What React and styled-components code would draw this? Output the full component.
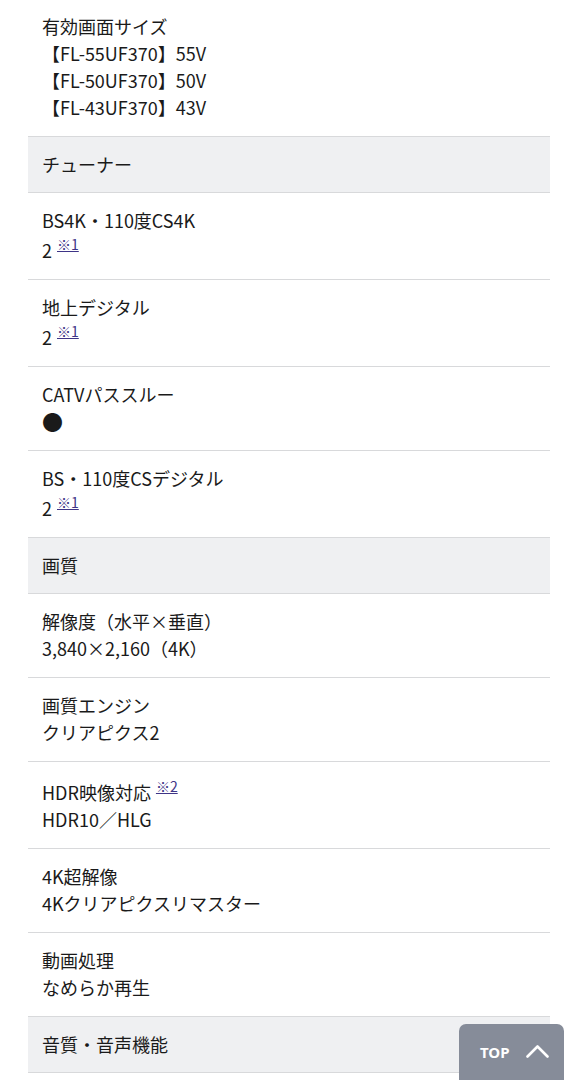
import React from "react";
import styled, { createGlobalStyle } from "styled-components";

const Global = createGlobalStyle`
  html, body { margin: 0; padding: 0; background: #fff; }
  body { font-family: "Noto Sans CJK JP", "Noto Sans", sans-serif; color: #1a1a1a; }
`;

const Page = styled.div`
  padding: 0 28px;
  margin-top: -1px;
  height: 1081px;
  overflow: hidden;
`;

const List = styled.div`
  display: flex;
  flex-direction: column;
`;

const Row = styled.div`
  padding: 14px 14px 15px;
  border-bottom: 1px solid #d8d9db;
  font-size: 18px;
  line-height: 27px;
  background: ${(p) => (p.$head ? "#eff0f2" : "#fff")};
  ${(p) => p.$head && "padding-bottom: 14px;"}
`;

const Line = styled.div``;

const Mark = styled.span`
  font-size: 21px;
  line-height: 27px;
  vertical-align: -1px;
`;

const Note = styled.a`
  font-size: 14px;
  color: #3e3487;
  text-decoration: underline;
  vertical-align: 8px;
  line-height: 21px;
  margin-left: 5px;
`;

const TopButton = styled.a`
  position: fixed;
  left: 459px;
  top: 1024px;
  width: 105px;
  height: 70px;
  box-sizing: border-box;
  background: #868c99;
  border-radius: 7px;
  display: flex;
  align-items: flex-start;
  padding: 18px 0 0 21px;
  gap: 16px;
  color: #fff;
  font-family: "Noto Sans", "Open Sans", sans-serif;
  font-weight: 700;
  font-size: 15px;
  line-height: 20px;
  text-decoration: none;
`;

const Chevron = () => (
  <svg width="23" height="14" viewBox="0 0 23 14" style={{ marginTop: 2 }}>
    <path d="M1.5 12.5 L11.5 2.5 L21.5 12.5" fill="none" stroke="#fff" strokeWidth="2.6" strokeLinecap="round" strokeLinejoin="round" />
  </svg>
);

const data = [
  { lines: ["有効画面サイズ", "【FL-55UF370】55V", "【FL-50UF370】50V", "【FL-43UF370】43V"] },
  { head: "チューナー" },
  { lines: ["BS4K・110度CS4K", ["2", "※1"]] },
  { lines: ["地上デジタル", ["2", "※1"]] },
  { lines: ["CATVパススルー", { mark: "●" }] },
  { lines: ["BS・110度CSデジタル", ["2", "※1"]] },
  { head: "画質" },
  { lines: ["解像度（水平×垂直）", "3,840×2,160（4K）"] },
  { lines: ["画質エンジン", "クリアピクス2"] },
  { lines: [["HDR映像対応", "※2"], "HDR10／HLG"] },
  { lines: ["4K超解像", "4Kクリアピクスリマスター"] },
  { lines: ["動画処理", "なめらか再生"] },
  { head: "音質・音声機能" },
];

function renderLine(l, j) {
  if (Array.isArray(l)) {
    return (
      <Line key={j}>
        {l[0]}
        <Note href="#">{l[1]}</Note>
      </Line>
    );
  }
  if (typeof l === "object") {
    return (
      <Line key={j}>
        <Mark>{l.mark}</Mark>
      </Line>
    );
  }
  return <Line key={j}>{l}</Line>;
}

export default function App() {
  return (
    <>
      <Global />
      <Page>
        <List>
          {data.map((r, i) =>
            r.head ? (
              <Row key={i} $head>{r.head}</Row>
            ) : (
              <Row key={i}>{r.lines.map(renderLine)}</Row>
            )
          )}
        </List>
      </Page>
      <TopButton href="#">
        TOP
        <Chevron />
      </TopButton>
    </>
  );
}
